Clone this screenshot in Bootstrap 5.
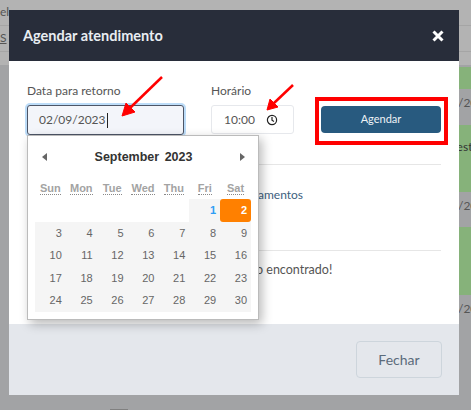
<!DOCTYPE html>
<html lang="pt-BR">
<head>
  <meta charset="UTF-8" />
  <title>Agendar atendimento</title>
  <link href="https://cdn.jsdelivr.net/npm/bootstrap@5.3.5/dist/css/bootstrap.min.css" rel="stylesheet">
  <style>
    html, body { height: 410px; overflow: hidden; }
    body { background: #a2a3a5; font-family: Lato, sans-serif; color: #444; }
    .page-bg { position: absolute; inset: 0; overflow: hidden; }
    .bg-top { height: 65px; background: #b3b3b3; }
    .bg-line { height: 26px; border-bottom: 1px solid #a5a5a5; font-size: 12px; color: #555; line-height: 24px; }
    .bg-s { text-decoration: underline; }
    .bg-cell { position: absolute; left: 459px; width: 12px; background: #86b27a; font-size: 12px; color: #333; }
    .bg-date { position: absolute; left: 451px; font-size: 12px; color: #555; white-space: nowrap; }
    .bg-foot { position: absolute; left: 110px; top: 409px; width: 18px; height: 1px; background: #808080; }
    .dialog { position: absolute; left: 9px; top: 10px; width: 450px; height: 385px; background: #fff; display: flex; flex-direction: column; }
    .dialog-head { height: 51px; background: #282d3a; color: #e9edf2; padding: 0 15px 0 14px; flex: none; }
    .dialog-head h5 { font-family: Lato, sans-serif; font-size: 14.5px; font-weight: 700; margin: 0; }
    .dialog-body { flex: 1; padding: 22px 18px 0 18px; min-height: 0; }
    .dialog-foot { height: 71px; flex: none; background: #e4e7ec; padding: 0 17px 0 0; }
    .fld-label { font-size: 12px; color: #555; line-height: 16px; margin-bottom: 6px; }
    .date-col { flex: 0 0 184px; }
    .time-col { flex: 0 0 83px; }
    .date-input { width: 157px; height: 30px; border: 1px solid #4d5566; border-radius: 3px; background: #f3f5fa; box-shadow: 0 0 0 2px #bcdcf8; font-size: 12px; color: #555; padding-left: 11px; }
    .caret-bar { display: inline-block; width: 1px; height: 15px; background: #222; margin-left: 1px; }
    .time-input { height: 29px; margin-top: 1px; border: 1px solid #e6e8ec; border-radius: 3px; font-size: 12px; color: #555; padding: 0 15px 0 12px; }
    .btn-agendar { width: 120px; height: 27px; padding: 0; background: #285a7f; border: 0; border-radius: 4px; color: #eef2f6; font-size: 11px; }
    .btn-agendar:hover { background: #285a7f; color: #eef2f6; }
    .red-box { flex: 0 0 133px; height: 48px; border: 4px solid #f00; padding: 5px 2px 8px 2px; margin-left: 21px; margin-top: 14px; }
    .top-row { height: 81px; }
    .rule { height: 1px; background: #e6e6e6; margin: 0; }
    .link-txt { color: #3d6180; font-size: 12px; line-height: 16px; padding-left: 231px; padding-top: 22px; height: 85px; }
    .notfound { font-size: 12.5px; padding: 10px 0 0 229px; color: #555; line-height: 18px; }
    .btn-fechar { width: 86px; height: 37px; padding: 0; background: #e4e7ec; border: 1px solid #cdd5dc; border-radius: 4px; color: #5b6b7b; font-size: 14px; }
    .dp { position: absolute; left: 27px; top: 135px; width: 232px; height: 185px; background: #fff; border: 1px solid #bbb; box-shadow: 3px 4px 10px rgba(0,0,0,.28); padding: 0 7px; font-family: "Liberation Sans", sans-serif; }
    .dp-title { height: 42px; padding: 0 6px 0 7px; }
    .dp-month { font-size: 12.5px; font-weight: 700; color: #333; word-spacing: 2px; }
    .dp-tri-l { width: 0; height: 0; border: 4px solid transparent; border-left: 0; border-right: 5px solid #666; }
    .dp-tri-r { width: 0; height: 0; border: 4px solid transparent; border-right: 0; border-left: 5px solid #666; }
    .dp-dows, .dp-week { display: grid; grid-template-columns: repeat(7, 30.86px); width: 216px; }
    .dp-dows { height: 21px; font-size: 11px; font-weight: 700; color: #a3a3a3; text-align: center; align-items: center; }
    .dp-dows span { justify-self: center; border-bottom: 1px dotted #888; line-height: 12px; }
    .dp-week { height: 22.6px; font-size: 11px; color: #666; background: #f5f5f5; }
    .dp-week span { text-align: right; padding-right: 4px; line-height: 23px; height: 23px; }
    .dp-first { background: linear-gradient(to right, #fff 154px, #f5f5f5 154px); }
    .dp-week .dp-today { color: #2f9df4; font-weight: 700; }
    .dp-week .dp-sel { background: #ff8000; color: #fff; font-weight: 700; border-radius: 3px; }
    .arrow-svg { position: absolute; left: 0; top: 0; pointer-events: none; }
  </style>
</head>
<body>
<div class="page-bg">
  <div class="bg-top">
    <div class="bg-line">ele</div>
    <div class="bg-line"><span class="bg-s">S</span></div>
  </div>
  <div class="bg-cell" style="top:67px;height:22px"></div>
  <div class="bg-date" style="top:94px">9/20</div>
  <div class="bg-cell" style="top:125px;height:67px"></div>
  <div class="bg-date" style="top:138px;color:#333">Test</div>
  <div class="bg-date" style="top:197px">9/20</div>
  <div class="bg-cell" style="top:227px;height:68px"></div>
  <div class="bg-date" style="top:300px">9/20</div>
  <div class="bg-foot"></div>
</div>

<div class="dialog">
  <div class="dialog-head d-flex align-items-center justify-content-between">
    <h5>Agendar atendimento</h5>
    <svg width="12" height="12" viewBox="0 0 12 12"><path d="M1.5 1.5l9 9M10.500 1.500l-9 9" stroke="#fff" stroke-width="3"/></svg>
  </div>
  <div class="dialog-body">
    <div class="d-flex top-row">
      <div class="date-col">
        <div class="fld-label">Data para retorno</div>
        <div class="date-input d-flex align-items-center">02/09/2023<span class="caret-bar"></span></div>
      </div>
      <div class="time-col">
        <div class="fld-label">Horário</div>
        <div class="time-input d-flex align-items-center justify-content-between">10:00
          <svg width="12" height="12" viewBox="0 0 12 12" fill="none" stroke="#222" stroke-width="1.200"><circle cx="6" cy="6" r="4.600"/><path d="M6 3v3.200l2 1.200"/></svg>
        </div>
      </div>
      <div class="red-box">
        <button class="btn btn-agendar d-block" type="button">Agendar</button>
      </div>
    </div>
    <div class="rule"></div>
    <div class="link-txt">amentos</div>
    <div class="rule"></div>
    <div class="notfound">o encontrado!</div>
  </div>
  <div class="dialog-foot d-flex align-items-center justify-content-end">
    <button class="btn btn-fechar" type="button">Fechar</button>
  </div>
</div>

<div class="dp">
  <div class="dp-title d-flex align-items-center justify-content-between">
    <span class="dp-tri-l"></span>
    <span class="dp-month">September 2023</span>
    <span class="dp-tri-r"></span>
  </div>
  <div class="dp-dows"><span>Sun</span><span>Mon</span><span>Tue</span><span>Wed</span><span>Thu</span><span>Fri</span><span>Sat</span></div>
  <div id="weeks"></div>
</div>

<svg class="arrow-svg" width="471" height="410" viewBox="0 0 471 410">
  <g stroke="#f00" fill="#f00">
    <path d="M162 77L130 108" stroke-width="2.500"/>
    <path d="M122 116l4-13 9 9z" stroke-width="1"/>
    <path d="M293 85L273 104" stroke-width="2.500"/>
    <path d="M267 110l3-11 8 8z" stroke-width="1"/>
  </g>
</svg>

<script>
  const weeks = document.getElementById('weeks');
  let html = '<div class="dp-week dp-first"><span></span><span></span><span></span><span></span><span></span><span class="dp-today">1</span><span class="dp-sel">2</span></div>';
  for (let d = 3; d <= 30; d += 7) {
    html += '<div class="dp-week">';
    for (let i = 0; i < 7; i++) html += '<span>' + (d + i) + '</span>';
    html += '</div>';
  }
  weeks.innerHTML = html;
</script>
<script src="https://cdn.jsdelivr.net/npm/bootstrap@5.3.5/dist/js/bootstrap.bundle.min.js"></script>
</body>
</html>
